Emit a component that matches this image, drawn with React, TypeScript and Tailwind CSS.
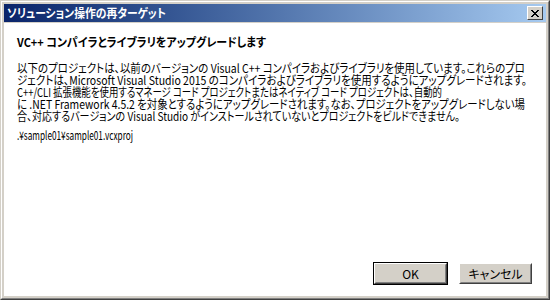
import React, { useLayoutEffect, useRef, useState } from 'react';

const lines: [string, number][] = [
  ['以下のプロジェクトは、以前のバージョンの Visual C++ コンパイラおよびライブラリを使用しています。これらのプロ', 508],
  ['ジェクトは、Microsoft Visual Studio 2015 のコンパイラおよびライブラリを使用するようにアップグレードされます。', 510],
  ['C++/CLI 拡張機能を使用するマネージ コード プロジェクトまたはネイティブ コード プロジェクトは、自動的', 425],
  ['に .NET Framework 4.5.2 を対象とするようにアップグレードされます。なお、プロジェクトをアップグレードしない場', 508],
  ['合、対応するバージョンの Visual Studio がインストールされていないとプロジェクトをビルドできません。', 443],
];

// squeeze a line horizontally to the width it has in the original dialog font
const Fit: React.FC<{ text: string; width: number; className?: string }> = ({ text, width, className }) => {
  const ref = useRef<HTMLSpanElement>(null);
  const [scale, setScale] = useState(1);
  useLayoutEffect(() => {
    if (ref.current) {
      const w = ref.current.getBoundingClientRect().width;
      if (w > 0) setScale(width / w);
    }
  }, [text, width]);
  return (
    <div className={`h-[12px] leading-[12px] whitespace-nowrap ${className ?? ''}`} style={{ width }}>
      <span ref={ref} className="inline-block origin-left" style={{ transform: `scaleX(${scale})` }}>
        {text}
      </span>
    </div>
  );
};

const Button: React.FC<{ label: string; isDefault?: boolean }> = ({ label, isDefault }) => (
  <div className={isDefault ? 'border border-black' : 'border border-transparent'}>
    <div className="border border-t-white border-l-white border-b-[#404040] border-r-[#404040]">
      <div className="w-[71px] h-[19px] bg-[#d4d0c8] border border-t-[#d4d0c8] border-l-[#d4d0c8] border-b-[#808080] border-r-[#808080] flex items-center justify-center text-[12px] text-black leading-none">
        {label}
      </div>
    </div>
  </div>
);

const App: React.FC = () => {
  return (
    <div
      className="w-[550px] h-[300px] overflow-hidden bg-[#d4d0c8] border border-t-[#d4d0c8] border-l-[#d4d0c8] border-b-[#404040] border-r-[#404040] [font-feature-settings:'palt']"
      style={{ fontFamily: '"Noto Sans CJK JP", "Liberation Sans", sans-serif' }}
    >
      <div className="h-full border border-t-white border-l-white border-b-[#808080] border-r-[#808080] p-[2px] flex flex-col">
        <div className="h-[18px] flex items-center justify-between pl-[3px] pr-[3px] bg-gradient-to-r from-[#0a246a] to-[#a6caf0]">
          <Fit text="ソリューション操作の再ターゲット" width={159} className="text-white font-bold text-[12px]" />
          <div className="w-[16px] h-[14px] bg-[#d4d0c8] border border-t-white border-l-white border-b-[#404040] border-r-[#404040] flex items-center justify-center">
            <svg width="8" height="7" viewBox="0 0 8 7" shapeRendering="crispEdges">
              <path d="M0 0h2v1h-2zM6 0h2v1h-2zM1 1h2v1h-2zM5 1h2v1h-2zM2 2h4v1h-4zM3 3h2v1h-2zM2 4h4v1h-4zM1 5h2v1h-2zM5 5h2v1h-2zM0 6h2v1h-2zM6 6h2v1h-2z" fill="#000" />
            </svg>
          </div>
        </div>
        <div className="flex-1 mt-[1px] bg-white flex flex-col pl-[13px] text-black">
          <Fit text="VC++ コンパイラとライブラリをアップグレードします" width={249} className="mt-[13px] text-[12px] font-bold" />
          <div className="mt-[14px] text-[12px]">
            {lines.map(([l, w], i) => (
              <Fit key={i} text={l} width={w} />
            ))}
          </div>
          <Fit text=".¥sample01¥sample01.vcxproj" width={116} className="mt-[7px] text-[12px]" />
          <div className="mt-auto mb-[11px] mr-[13px] flex justify-end gap-[10px]">
            <Button label="OK" isDefault />
            <Button label="キャンセル" />
          </div>
        </div>
      </div>
    </div>
  );
};

export default App;
